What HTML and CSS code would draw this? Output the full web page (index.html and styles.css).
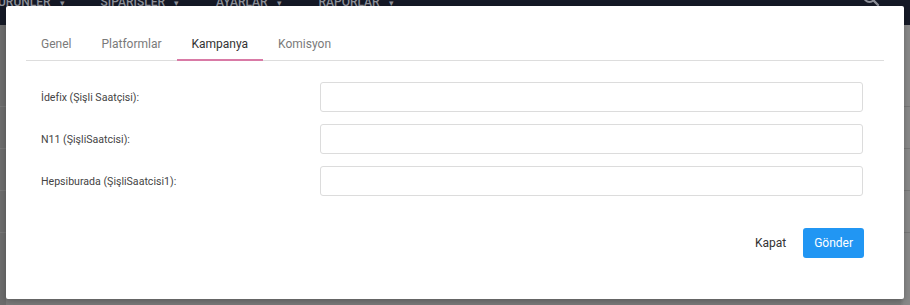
FILE: index.html
```html
<!DOCTYPE html>
<html lang="tr">
<head>
    <meta charset="UTF-8">
    <meta name="viewport" content="width=device-width, initial-scale=1.0">
    <title>Kampanya</title>
    <link rel="stylesheet" href="styles.css">
</head>
<body>
    <div class="topbar">
        <ul class="nav">
            <li>ÜRÜNLER <span class="caret">▾</span></li>
            <li>SİPARİŞLER <span class="caret">▾</span></li>
            <li>AYARLAR <span class="caret">▾</span></li>
            <li>RAPORLAR <span class="caret">▾</span></li>
        </ul>
        <svg class="search" width="18" height="18" viewBox="0 0 18 18">
            <circle cx="7.5" cy="7.5" r="5.5" fill="none" stroke="#8e919a" stroke-width="2"/>
            <path d="M11.5 11.5 L16 16" stroke="#8e919a" stroke-width="2.4" stroke-linecap="round"/>
        </svg>
    </div>
    <div class="backdrop">
        <div class="row-line"></div>
        <div class="row-line"></div>
        <div class="row-line"></div>
        <div class="row-line"></div>
    </div>

    <div class="modal">
        <ul class="tabs">
            <li class="tab">Genel</li>
            <li class="tab">Platformlar</li>
            <li class="tab active">Kampanya</li>
            <li class="tab">Komisyon</li>
        </ul>
        <form class="form">
            <div class="field">
                <label>İdefix (Şişli Saatçisi):</label>
                <input type="text">
            </div>
            <div class="field">
                <label>N11 (ŞişliSaatcisi):</label>
                <input type="text">
            </div>
            <div class="field">
                <label>Hepsiburada (ŞişliSaatcisi1):</label>
                <input type="text">
            </div>
        </form>
        <div class="footer">
            <button class="btn-link" type="button">Kapat</button>
            <button class="btn-primary" type="button">Gönder</button>
        </div>
    </div>
</body>
</html>
```

FILE: styles.css
```css
* {
    box-sizing: border-box;
}
body {
    margin: 0;
    height: 305px;
    overflow: hidden;
    background-color: #7a7a7a;
    font-family: Roboto, "Liberation Sans", sans-serif;
}
.topbar {
    height: 25px;
    background-color: #151926;
    position: relative;
    overflow: hidden;
}
.nav {
    list-style: none;
    margin: -6px 0 0 -2px;
    padding: 0;
    display: flex;
}
.nav li {
    color: #8e919a;
    font-size: 12px;
    font-weight: 500;
    line-height: 16px;
    margin-right: 36px;
}
.nav li:nth-child(2),
.nav li:nth-child(3) {
    margin-right: 37px;
}
.caret {
    font-size: 9px;
    margin-left: 6px;
}
.search {
    position: absolute;
    right: 30px;
    top: -11px;
}
.backdrop {
    padding-top: 40px;
    background: linear-gradient(to right, #6c6c6c 0, #6c6c6c 6px, #7a7a7a 6px, #7a7a7a 900px, #888 904px);
    height: 280px;
}
.row-line {
    height: 42px;
    border-bottom: 1px solid #777;
}
.modal {
    position: absolute;
    top: 6px;
    left: 6px;
    width: 898px;
    height: 293px;
    background-color: #fff;
    border-radius: 2px;
    padding: 15px 20px 0;
    box-shadow: 0 2px 6px rgba(0, 0, 0, 0.25);
}
.tabs {
    list-style: none;
    margin: 0;
    padding: 0;
    display: flex;
    border-bottom: 1px solid #ddd;
}
.tab {
    padding: 13px 15px 5px;
    line-height: 20px;
    font-size: 12px;
    color: #7a7a7a;
    border-bottom: 2px solid transparent;
    margin-bottom: -1px;
    cursor: pointer;
}
.tab.active {
    color: #333;
    border-bottom-color: #d97aa6;
}
.form {
    margin-top: 21px;
    padding: 0 21px 0 15px;
}
.field {
    display: grid;
    grid-template-columns: 279px 1fr;
    align-items: center;
    margin-bottom: 12px;
}
.field label {
    font-size: 10.6px;
    color: #444;
}
.field input {
    height: 30px;
    border: 1px solid #dcdcdc;
    border-radius: 3px;
    font-size: 12px;
    padding: 0 8px;
}
.footer {
    display: flex;
    justify-content: flex-end;
    align-items: center;
    margin-top: 32px;
    padding-right: 20px;
}
.btn-link {
    background: none;
    border: none;
    font-family: inherit;
    font-size: 12px;
    color: #333;
    padding: 0 11px;
    margin-right: 6px;
    height: 30px;
    cursor: pointer;
}
.btn-primary {
    background-color: #2196f3;
    color: #fff;
    border: none;
    border-radius: 3px;
    font-family: inherit;
    font-size: 12px;
    height: 30px;
    padding: 0 11px;
    cursor: pointer;
}
```
